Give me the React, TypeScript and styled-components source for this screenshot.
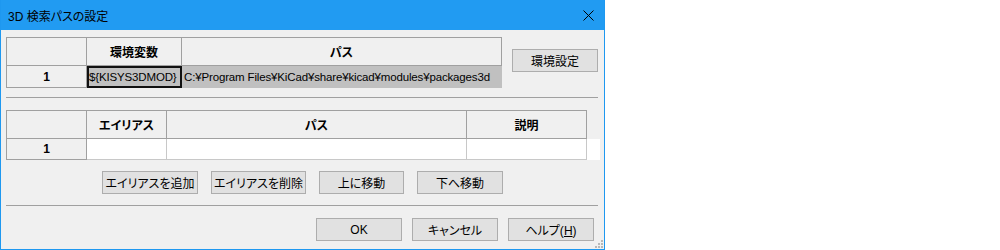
import React from "react";
import styled, { createGlobalStyle } from "styled-components";

const FONT = `"Liberation Sans", "Noto Sans CJK JP", sans-serif`;

const Global = createGlobalStyle`
  html, body { margin: 0; padding: 0; background: #ffffff; }
  body {
    font-family: ${FONT};
    font-size: 12px;
    color: #000;
    font-feature-settings: "palt";
  }
  * { box-sizing: border-box; }
`;

const Window = styled.div`
  position: relative;
  width: 605px;
  height: 250px;
  border: 1px solid #1e98f0;
  border-top: none;
  background: #f0f0f0;
  display: flex;
  flex-direction: column;
`;

const TitleBar = styled.div`
  height: 30px;
  background: #219bf2;
  display: flex;
  align-items: center;
  justify-content: space-between;
  padding: 0 10px 0 7px;
  font-size: 12px;
  color: #000;
  flex-shrink: 0;
`;

const Content = styled.div`
  display: flex;
  flex-direction: column;
  padding: 7px 6px 0 5px;
`;

const TopRow = styled.div`
  display: flex;
  align-items: flex-start;
  gap: 10px;
`;

const Grid = styled.div<{ $cols: string }>`
  display: grid;
  grid-template-columns: ${(p) => p.$cols};
  font-size: 12px;
`;

const HeadCell = styled.div<{ $first?: boolean; $blank?: boolean }>`
  height: 29px;
  display: flex;
  align-items: center;
  justify-content: center;
  font-weight: bold;
  background: #f0f0f0;
  border-top: ${(p) => (p.$blank ? "none" : "1px solid #a0a0a0")};
  border-right: ${(p) => (p.$blank ? "none" : "1px solid #a0a0a0")};
  border-bottom: ${(p) => (p.$blank ? "none" : "1px solid #a0a0a0")};
  border-left: ${(p) => (p.$first ? "1px solid #a0a0a0" : "none")};
  padding-bottom: 1px;
`;

const LabelCell = styled.div<{ $h: number }>`
  height: ${(p) => p.$h}px;
  display: flex;
  align-items: center;
  justify-content: center;
  font-weight: bold;
  background: #f0f0f0;
  border-left: 1px solid #a0a0a0;
  border-right: 1px solid #a0a0a0;
  border-bottom: 1px solid #a0a0a0;
`;

const DataCell = styled.div<{ $h: number; $bg?: string; $cursor?: boolean; $noBorder?: boolean }>`
  height: ${(p) => p.$h}px;
  display: flex;
  align-items: center;
  padding: 0 2px;
  font-size: 11.5px;
  letter-spacing: -0.15px;
  white-space: nowrap;
  overflow: hidden;
  background: ${(p) => p.$bg || "#ffffff"};
  border-right: ${(p) => (p.$noBorder ? "none" : "1px solid #c8c8c8")};
  border-bottom: ${(p) => (p.$noBorder ? "none" : "1px solid #c8c8c8")};
  box-shadow: ${(p) => (p.$cursor ? "inset 0 0 0 2px #111" : "none")};
`;

const Button = styled.button<{ $w: number }>`
  width: ${(p) => p.$w}px;
  height: 23px;
  padding: 0;
  background: #e1e1e1;
  border: 1px solid #adadad;
  border-radius: 0;
  font-family: ${FONT};
  font-feature-settings: "palt";
  font-size: 12px;
  color: #000;
  white-space: nowrap;
  display: flex;
  align-items: center;
  justify-content: center;
`;

const SideButton = styled(Button)`
  margin-top: 12px;
`;

const Separator = styled.div<{ $top: number; $bottom: number }>`
  height: 1px;
  background: #a0a0a0;
  margin-top: ${(p) => p.$top}px;
  margin-bottom: ${(p) => p.$bottom}px;
`;

const ActionRow = styled.div`
  display: flex;
  justify-content: center;
  gap: 13px;
  margin-top: 11px;
  padding-left: 1px;
`;

const FooterRow = styled.div`
  display: flex;
  justify-content: flex-end;
  gap: 10px;
  padding-right: 4px;
`;

const Grip = styled.svg`
  position: absolute;
  right: 1px;
  bottom: 1px;
`;

const CloseIcon = () => (
  <svg width="11" height="11" viewBox="0 0 11 11">
    <path d="M0.5 0.5 L10.5 10.5 M10.5 0.5 L0.5 10.5" stroke="#000" strokeWidth="1" fill="none" />
  </svg>
);

export default function App() {
  return (
    <>
      <Global />
      <Window>
        <TitleBar>
          <span>3D 検索パスの設定</span>
          <CloseIcon />
        </TitleBar>
        <Content>
          <TopRow>
            <Grid $cols="81px 95px 320px">
              <HeadCell $first />
              <HeadCell>環境変数</HeadCell>
              <HeadCell>パス</HeadCell>
              <LabelCell $h={22}>1</LabelCell>
              <DataCell $h={22} $bg="#c0c0c0" $cursor $noBorder>
                {"${KISYS3DMOD}"}
              </DataCell>
              <DataCell $h={22} $bg="#c0c0c0" $noBorder>
                C:¥Program Files¥KiCad¥share¥kicad¥modules¥packages3d
              </DataCell>
            </Grid>
            <SideButton $w={86}>環境設定</SideButton>
          </TopRow>
          <Separator $top={9} $bottom={12} />
          <Grid $cols="81px 80px 300px 120px 13px">
            <HeadCell $first />
            <HeadCell>エイリアス</HeadCell>
            <HeadCell>パス</HeadCell>
            <HeadCell>説明</HeadCell>
            <HeadCell $blank />
            <LabelCell $h={21}>1</LabelCell>
            <DataCell $h={21} />
            <DataCell $h={21} />
            <DataCell $h={21} />
            <DataCell $h={21} $noBorder />
          </Grid>
          <ActionRow>
            <Button $w={96}>エイリアスを追加</Button>
            <Button $w={95}>エイリアスを削除</Button>
            <Button $w={85}>上に移動</Button>
            <Button $w={86}>下へ移動</Button>
          </ActionRow>
          <Separator $top={11} $bottom={12} />
          <FooterRow>
            <Button $w={86}>OK</Button>
            <Button $w={86}>キャンセル</Button>
            <Button $w={86}>
              <span>
                ヘルプ(<u>H</u>)
              </span>
            </Button>
          </FooterRow>
        </Content>
        <Grip width="8" height="8" viewBox="0 0 8 8">
          <rect x="6" y="0" width="2" height="2" fill="#b8b8b8" />
          <rect x="3" y="3" width="2" height="2" fill="#b8b8b8" />
          <rect x="6" y="3" width="2" height="2" fill="#b8b8b8" />
          <rect x="0" y="6" width="2" height="2" fill="#b8b8b8" />
          <rect x="3" y="6" width="2" height="2" fill="#b8b8b8" />
          <rect x="6" y="6" width="2" height="2" fill="#b8b8b8" />
        </Grip>
      </Window>
    </>
  );
}
